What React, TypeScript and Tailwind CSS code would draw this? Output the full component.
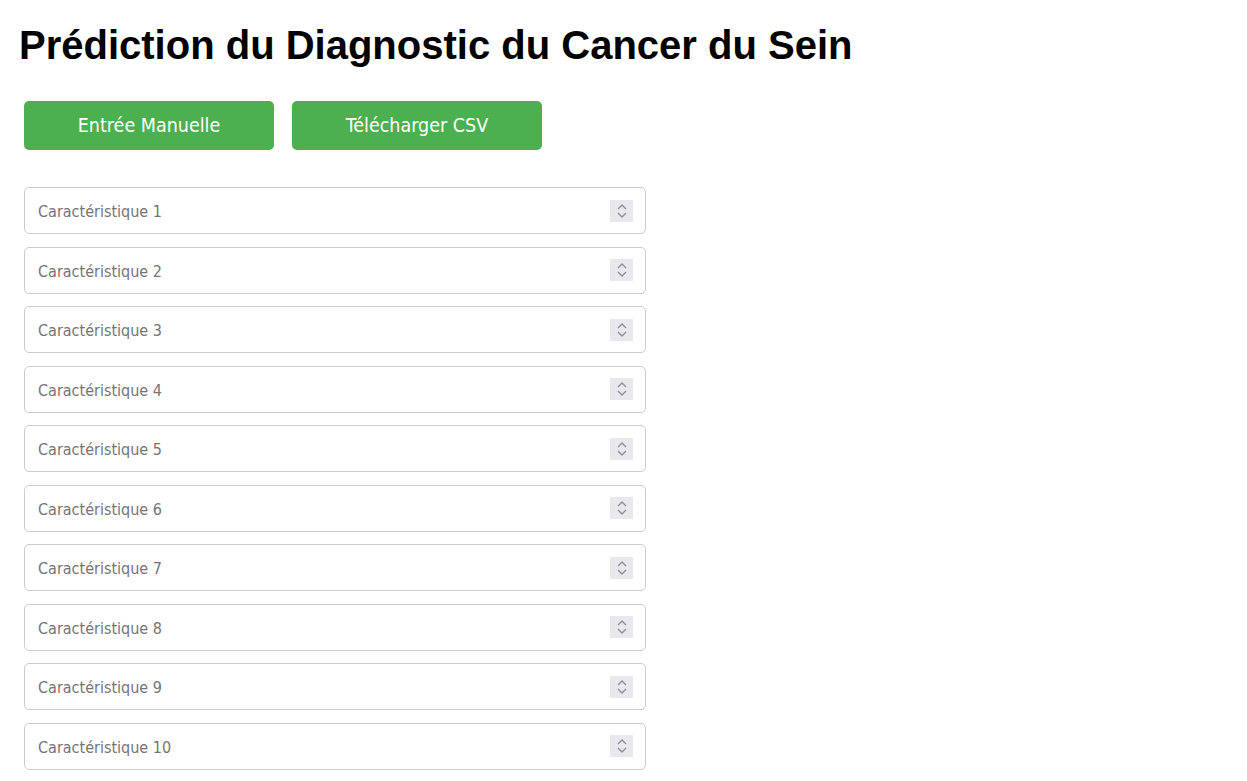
import React from "react";

const features = Array.from({ length: 10 }, (_, i) => `Caractéristique ${i + 1}`);

function Spinner() {
  return (
    <div className="flex h-[22px] w-[23px] items-center justify-center bg-[#e9e9ed]">
      <svg width="12" height="18" viewBox="0 0 12 18" fill="none" stroke="#8e8e99" strokeWidth="1.4">
        <path d="M2 7 L6 3 L10 7" />
        <path d="M2 11 L6 15 L10 11" />
      </svg>
    </div>
  );
}

export default function App() {
  return (
    <div className="min-h-screen bg-white px-[19px] pt-[20px] font-['DejaVu_Sans',sans-serif] [font-stretch:condensed]">
      <h1 className="font-['Liberation_Sans',Arial,sans-serif] text-[40px] font-bold leading-[50px] text-black [font-stretch:normal]">
        Prédiction du Diagnostic du Cancer du Sein
      </h1>

      <div className="mt-[31px] flex gap-[18px] pl-[5px]">
        <button className="h-[49px] w-[250px] rounded-[5px] bg-[#4caf50] pt-[1px] text-[19.5px] text-white">
          Entrée Manuelle
        </button>
        <button className="h-[49px] w-[250px] rounded-[5px] bg-[#4caf50] pt-[1px] text-[19.5px] text-white">
          Télécharger CSV
        </button>
      </div>

      <div className="mt-[37px] flex w-[627px] flex-col gap-[12.5px] pl-[5px]">
        {features.map((label) => (
          <div
            key={label}
            className="flex h-[47px] w-[622px] items-center justify-between rounded-[5px] border border-[#cccccc] pl-[13px] pr-[12px]"
          >
            <span className="pt-[3px] text-[16px] text-[#757575]">{label}</span>
            <Spinner />
          </div>
        ))}
      </div>
    </div>
  );
}
